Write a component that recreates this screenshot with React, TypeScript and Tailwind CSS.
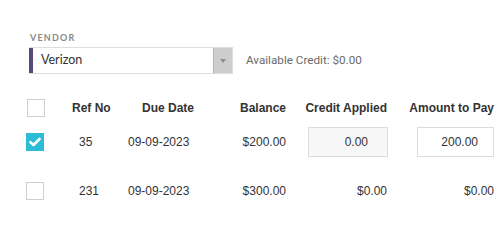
import React from "react";

const Check = () => (
  <div className="w-[18px] h-[18px] bg-[#2cbdd6] flex items-center justify-center">
    <svg width="12" height="10" viewBox="0 0 12 10">
      <path d="M1.5 5.2 L4.5 8 L10.5 2" stroke="white" strokeWidth="2.6" fill="none" strokeLinecap="round" strokeLinejoin="round" />
    </svg>
  </div>
);

const Box = () => <div className="w-[18px] h-[18px] border border-[#cfcfcf] bg-white" />;

export default function App() {
  return (
    <div className="w-[503px] h-[236px] bg-white pl-[29px] pt-[33px]" style={{ fontFamily: '"Liberation Sans", Arial, sans-serif' }}>
      <div className="text-[9px] leading-[9px] font-bold tracking-[1.2px] text-[#8a8a8a] pl-[1px]" style={{ fontFamily: 'Lato, sans-serif' }}>VENDOR</div>
      <div className="flex items-center mt-[5px]">
        <div className="flex w-[204px] h-[27px] border border-[#dedede] border-l-0">
          <div className="w-[4px] bg-[#584a7a]" />
          <div className="flex-1 flex items-center pl-[8px] text-[12.5px] text-[#333]" style={{ fontFamily: 'Lato, sans-serif' }}>Verizon</div>
          <div className="w-[19px] bg-[#cdcdcd] border-l border-[#b5b5b5] flex items-center justify-center">
            <svg width="6" height="4" viewBox="0 0 6 4"><path d="M0 0 L6 0 L3 4 Z" fill="#8e8e8e" /></svg>
          </div>
        </div>
        <div className="ml-[13px] text-[11.7px] text-[#6a6a6a]" style={{ fontFamily: 'Roboto, sans-serif' }}>Available Credit: $0.00</div>
      </div>

      <div className="mt-[25px] -ml-[3px] text-[12px] text-[#333]">
        <div className="flex items-center h-[18px]">
          <div className="w-[46px] pl-[1px]"><Box /></div>
          <div className="w-[48px] font-bold">Ref No</div>
          <div className="w-[80px] pl-[22px] font-bold">Due Date</div>
          <div className="w-[86px] text-right font-bold">Balance</div>
          <div className="w-[102px] text-right font-bold pr-[1px]">Credit Applied</div>
          <div className="w-[106px] text-right font-bold">Amount to Pay</div>
        </div>
        <div className="flex items-center h-[30px] mt-[10px]">
          <div className="w-[46px]"><Check /></div>
          <div className="w-[48px] pl-[7px]">35</div>
          <div className="w-[80px] pl-[8px]">09-09-2023</div>
          <div className="w-[86px] text-right">$200.00</div>
          <div className="w-[102px] flex justify-end">
            <div className="w-[80px] h-[30px] bg-[#f7f7f7] border border-[#dcdcdc] flex items-center justify-end pr-[19px]">0.00</div>
          </div>
          <div className="w-[106px] flex justify-end">
            <div className="w-[77px] h-[30px] bg-white border border-[#dcdcdc] flex items-center justify-end pr-[15px]">200.00</div>
          </div>
        </div>
        <div className="flex items-center h-[19px] mt-[24px]">
          <div className="w-[46px]"><Box /></div>
          <div className="w-[48px] pl-[7px]">231</div>
          <div className="w-[80px] pl-[8px]">09-09-2023</div>
          <div className="w-[86px] text-right">$300.00</div>
          <div className="w-[102px] text-right pr-[1px]">$0.00</div>
          <div className="w-[106px] text-right">$0.00</div>
        </div>
      </div>
    </div>
  );
}
